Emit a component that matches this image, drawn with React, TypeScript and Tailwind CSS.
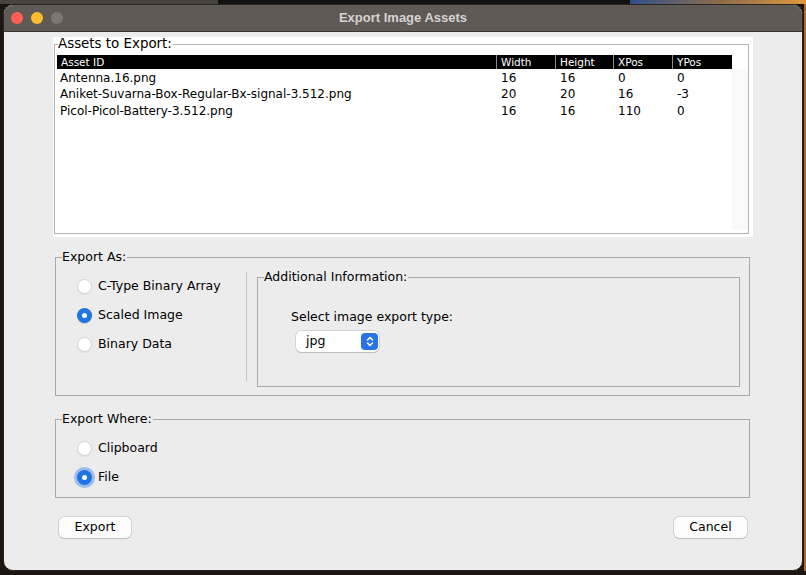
const ui = "font-['DejaVu_Sans',sans-serif]";

const columns = [
  { label: "Asset ID", w: "w-[439px]" },
  { label: "Width", w: "w-[59px]" },
  { label: "Height", w: "w-[58px]" },
  { label: "XPos", w: "w-[59px]" },
  { label: "YPos", w: "w-[60px]" },
];

const assets = [
  ["Antenna.16.png", "16", "16", "0", "0"],
  ["Aniket-Suvarna-Box-Regular-Bx-signal-3.512.png", "20", "20", "16", "-3"],
  ["Picol-Picol-Battery-3.512.png", "16", "16", "110", "0"],
];

function Radio({ label, checked, focused }: { label: string; checked?: boolean; focused?: boolean }) {
  return (
    <div className="flex h-[29px] items-center gap-[6px] pl-[21px]">
      {checked ? (
        <span
          className={`flex h-[15px] w-[15px] items-center justify-center rounded-full bg-[#1f73e2] ${
            focused ? "shadow-[0_0_0_3px_rgba(60,130,230,0.45)]" : "shadow-[0_1px_1px_rgba(0,0,0,0.15)]"
          }`}
        >
          <span className="h-[5px] w-[5px] rounded-full bg-white" />
        </span>
      ) : (
        <span className="h-[15px] w-[15px] rounded-full border border-[#d4d4d4] bg-white shadow-[0_1px_1px_rgba(0,0,0,0.06)]" />
      )}
      <span>{label}</span>
    </div>
  );
}

function AssetTable() {
  return (
    <div className="flex h-[175px]">
      <div className="w-[675px]">
        <div className="flex h-[14px] items-center bg-black text-[10.5px] leading-[14px] text-white">
          {columns.map((c, i) => (
            <div
              key={c.label}
              className={`${c.w} h-full pl-[4px] ${i > 0 ? "border-l border-[#8a8a8a]" : ""}`}
            >
              {c.label}
            </div>
          ))}
        </div>
        {assets.map((row) => (
          <div key={row[0]} className="flex h-[16.5px] items-center pt-[1px] text-[12px] text-black">
            {row.map((cell, i) => (
              <div key={i} className={`${columns[i].w} ${i > 0 ? "pl-[5px]" : "pl-[3px]"}`}>
                {cell}
              </div>
            ))}
          </div>
        ))}
      </div>
      <div className="flex w-[16px] flex-col">
        <div className="h-[14px] bg-white" />
        <div className="flex-1 bg-[#f9f9f9]" />
      </div>
    </div>
  );
}

function SelectBox() {
  return (
    <div className="ml-[5px] mt-[4px] flex h-[21px] w-[83px] items-center justify-between rounded-[5px] bg-white pl-[10px] pr-[1px] shadow-[0_0_0_0.5px_rgba(0,0,0,0.2),0_1px_1px_rgba(0,0,0,0.12)]">
      <span>jpg</span>
      <span className="flex h-[17px] w-[17px] items-center justify-center rounded-[4px] bg-[#2a73e6]">
        <svg width="8" height="11" viewBox="0 0 8 11" fill="none" stroke="white" strokeWidth="1.5" strokeLinecap="round" strokeLinejoin="round">
          <path d="M1.5 4 L4 1.5 L6.5 4" />
          <path d="M1.5 7 L4 9.5 L6.5 7" />
        </svg>
      </span>
    </div>
  );
}

export default function App() {
  return (
    <div className={`flex h-[575px] w-[806px] flex-col overflow-hidden bg-[#1c1511] ${ui}`}>
      <div className="flex h-[4px] shrink-0">
        <div className="w-[218px] bg-[#47433f]" />
        <div className="flex-1 bg-[#141210]" />
        <div className="w-[176px] bg-gradient-to-r from-[#2f4f86] via-[#8a6a4a] to-[#e39a3b]" />
      </div>
      <div className="flex h-[567px] shrink-0">
        <div className="w-[3px]" />
        <div className="flex w-[800px] flex-col overflow-hidden rounded-[10px] border border-[#2a2420] bg-[#ececec]">
          <div className="relative flex h-[27px] shrink-0 items-center justify-center border-b border-[#3a3633] bg-[#5f5a56]">
            <div className="absolute left-[7px] top-[7px] flex gap-[8px]">
              <span className="h-[12px] w-[12px] rounded-full bg-[#fe5f57]" />
              <span className="h-[12px] w-[12px] rounded-full bg-[#febc2e]" />
              <span className="h-[12px] w-[12px] rounded-full bg-[#7b7773]" />
            </div>
            <span className="font-['Liberation_Sans',sans-serif] text-[13px] font-bold text-[#d6d2ce]">
              Export Image Assets
            </span>
          </div>

          <div className="flex flex-1 flex-col pl-[51px] pr-[52px] text-[12.5px] text-black">
            <div className="ml-[-2px] mr-[-3px] mt-[5px] h-[200px] bg-white pl-[1px] pr-[4px]">
              <fieldset className="h-[197px] border border-[#b4b4b4] pl-[2px] pb-[3px]">
                <legend className="ml-[1px] pr-[1px] text-[13.4px] leading-[14px]">Assets to Export:</legend>
                <div className="pt-[4px]">
                  <AssetTable />
                </div>
              </fieldset>
            </div>

            <fieldset className="mt-[13px] h-[146px] border border-[#a9a9a9]">
              <legend className="ml-[6px] pr-[1px] leading-[14px]">Export As:</legend>
              <div className="flex h-[125px] pt-[6px] pb-[8px]">
                <div className="w-[190px] pt-[2px]">
                  <Radio label="C-Type Binary Array" />
                  <Radio label="Scaled Image" checked />
                  <Radio label="Binary Data" />
                </div>
                <div className="mt-[2px] w-px bg-[#c4c4c4]" />
                <fieldset className="ml-[10px] h-[117px] w-[483px] border border-[#a9a9a9]">
                  <legend className="ml-[6px] pr-[1px] leading-[14px]">Additional Information:</legend>
                  <div className="pl-[33px] pt-[24px]">
                    <div>Select image export type:</div>
                    <SelectBox />
                  </div>
                </fieldset>
              </div>
            </fieldset>

            <fieldset className="mt-[16px] h-[86px] border border-[#a9a9a9]">
              <legend className="ml-[6px] pr-[1px] leading-[14px]">Export Where:</legend>
              <div className="pt-[8px]">
                <Radio label="Clipboard" />
                <Radio label="File" checked focused />
              </div>
            </fieldset>

            <div className="mt-[19px] flex justify-between px-[4px]">
              <button className="h-[21px] w-[72px] rounded-[5px] bg-[#fcfcfc] shadow-[0_0_0_0.5px_rgba(0,0,0,0.22),0_1px_1px_rgba(0,0,0,0.1)]">
                Export
              </button>
              <button className="mr-[-1px] h-[21px] w-[73px] rounded-[5px] bg-[#fcfcfc] shadow-[0_0_0_0.5px_rgba(0,0,0,0.22),0_1px_1px_rgba(0,0,0,0.1)]">
                Cancel
              </button>
            </div>
          </div>
        </div>
        <div className="w-[1px]" />
        <div className="w-[2px] bg-[#b8661e]" />
      </div>
    </div>
  );
}
